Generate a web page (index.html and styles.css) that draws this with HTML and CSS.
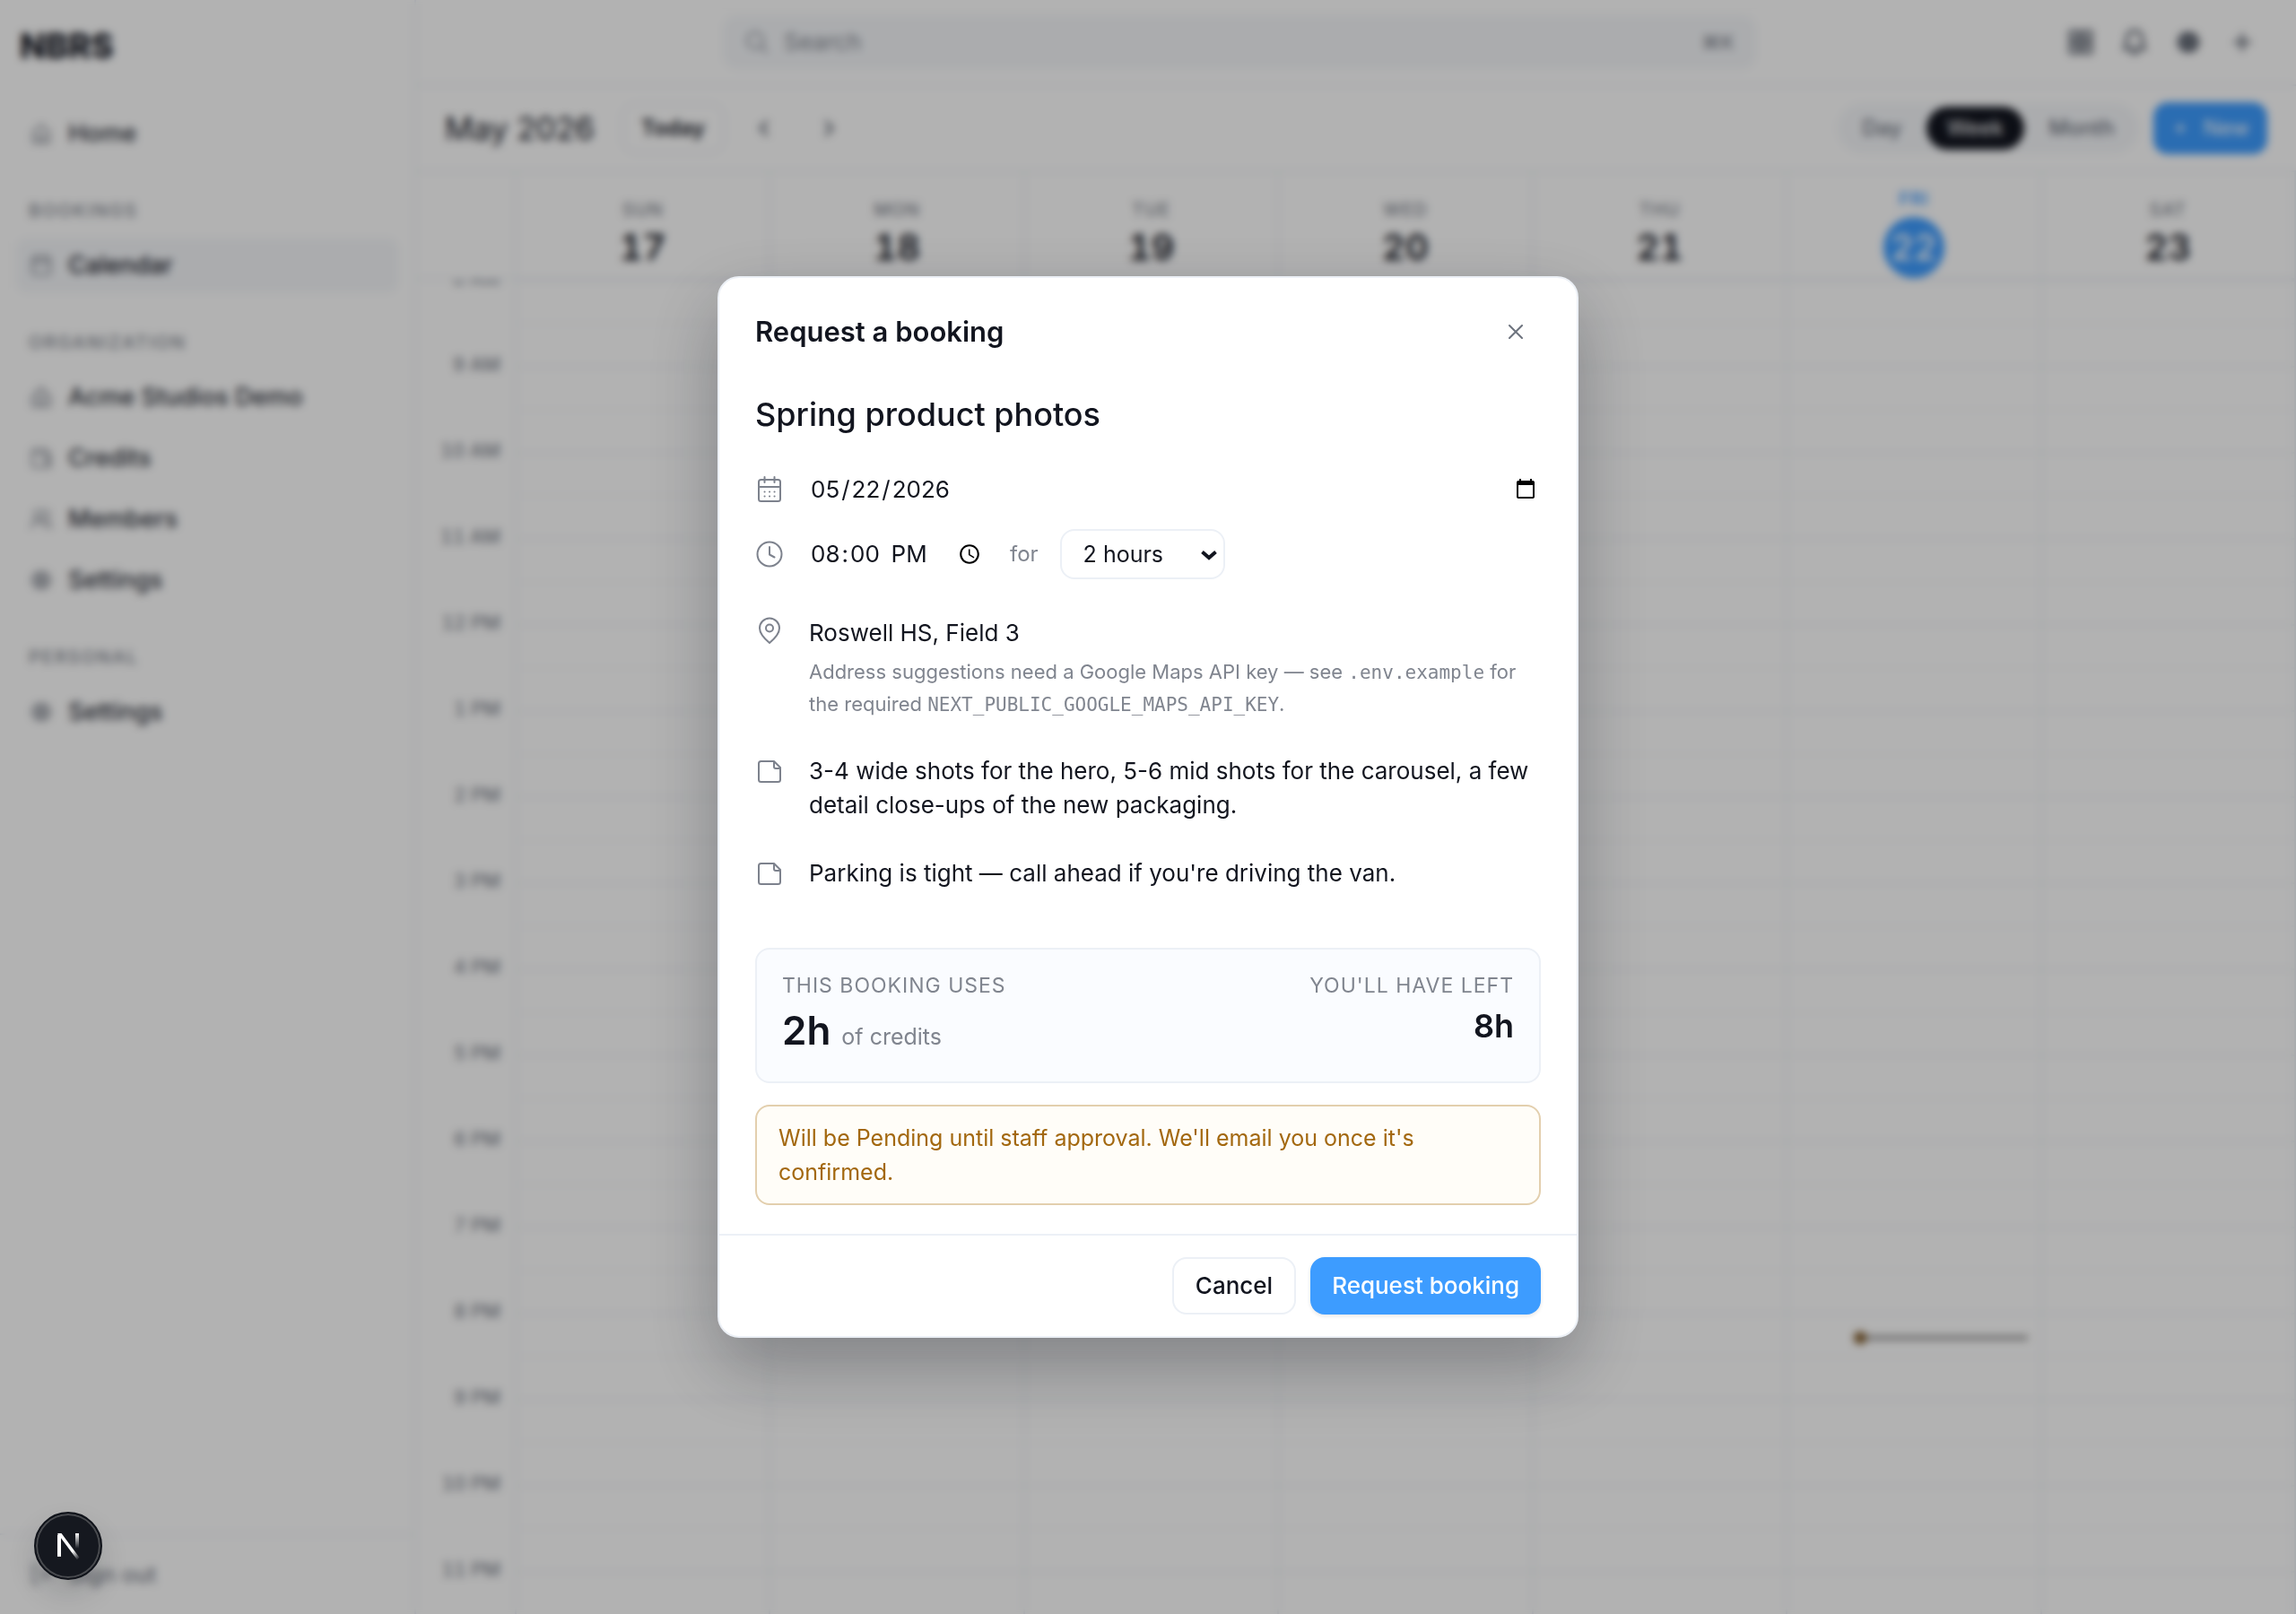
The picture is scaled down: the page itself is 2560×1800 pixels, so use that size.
FILE: index.html
```html
<!DOCTYPE html>
<html lang="en">
<head>
<meta charset="utf-8">
<title>NBRS Calendar</title>
<link rel="stylesheet" href="styles.css">
</head>
<body>
<svg class="sprite" aria-hidden="true">
  <symbol id="home" viewBox="0 0 28 28"><path d="M5 12 14 4l9 8v12H5zM11 24v-8h6v8"/></symbol>
  <symbol id="cal" viewBox="0 0 28 28"><rect x="4" y="5" width="20" height="19" rx="3"/><path d="M4 11h20M9 2v5M19 2v5"/></symbol>
  <symbol id="org" viewBox="0 0 28 28"><path d="M4 24V13h4V8l6-5 6 5v5h4v11zM11 24v-6h6v6M11 12h6"/></symbol>
  <symbol id="wallet" viewBox="0 0 28 28"><path d="M20 9V4H7a3 3 0 0 0-3 3v14a3 3 0 0 0 3 3h17V9H7M24 14h-6v5h6"/></symbol>
  <symbol id="users" viewBox="0 0 28 28"><circle cx="11" cy="9" r="5"/><path d="M3 24c0-5 3-8 8-8s8 3 8 8M18 4a5 5 0 0 1 0 10M21 17c3 1 4 4 4 7"/></symbol>
  <symbol id="gear" viewBox="0 0 28 28"><path d="M14 4l3 2 4-0 1 4 3 4-3 4-1 4h-4l-3 2-3-2H7l-1-4-3-4 3-4 1-4h4z"/><circle cx="14" cy="14" r="3"/><circle cx="14" cy="14" r="6"/></symbol>
  <symbol id="exit" viewBox="0 0 28 28"><path d="M11 4H5v20h6M18 9l5 5-5 5M23 14H11"/></symbol>
  <symbol id="note" viewBox="0 0 32 32"><path d="M20.5 4H6.500a2.500 2.500 0 0 0-2.500 2.500v18a2.500 2.500 0 0 0 2.500 2.500h19a2.500 2.500 0 0 0 2.500-2.500V11L21 4v6a2 2 0 0 0 2 2h5"/></symbol>
</svg>

<div class="app">
  <aside class="sidebar">
    <div class="logo">NBRS</div>
    <nav class="nav">
      <a class="nav-item" href="#"><svg class="nav-icon"><use href="#home"/></svg>Home</a>
      <div class="nav-label">BOOKINGS</div>
      <a class="nav-item active" href="#"><svg class="nav-icon"><use href="#cal"/></svg>Calendar</a>
      <div class="nav-label">ORGANIZATION</div>
      <div class="nav-group">
        <a class="nav-item" href="#"><svg class="nav-icon"><use href="#org"/></svg>Acme Studios Demo</a>
        <a class="nav-item" href="#"><svg class="nav-icon"><use href="#wallet"/></svg>Credits</a>
        <a class="nav-item" href="#"><svg class="nav-icon"><use href="#users"/></svg>Members</a>
        <a class="nav-item" href="#"><svg class="nav-icon"><use href="#gear"/></svg>Settings</a>
      </div>
      <div class="nav-label">PERSONAL</div>
      <a class="nav-item" href="#"><svg class="nav-icon"><use href="#gear"/></svg>Settings</a>
    </nav>
    <div class="signout"><a class="nav-item quiet" href="#"><svg class="nav-icon"><use href="#exit"/></svg>Sign out</a></div>
  </aside>

  <div class="main">
    <header class="topbar">
      <div class="search-slot">
        <label class="search">
          <svg class="search-icon" viewBox="0 0 28 28"><circle cx="12" cy="12" r="9"/><path d="M19 19l6 6"/></svg>
          <input class="search-input" type="text" placeholder="Search" aria-label="Search">
          <kbd class="kbd">⌘K</kbd>
        </label>
      </div>
      <div class="top-actions">
        <button class="icon-btn" aria-label="Apps"><svg viewBox="0 0 28 28"><path d="M3 3h9v9H3zM16 3h9v9h-9zM3 16h9v9H3zM16 16h9v9h-9z"/></svg></button>
        <button class="icon-btn" aria-label="Notifications"><svg viewBox="0 0 28 28"><path d="M14 2a8 8 0 0 0-8 8v6l-3 5h22l-3-5v-6a8 8 0 0 0-8-8zM11 25h6"/></svg></button>
        <button class="icon-btn" aria-label="Settings"><svg viewBox="0 0 28 28"><use href="#gear"/></svg></button>
        <button class="icon-btn" aria-label="Add"><svg viewBox="0 0 28 28"><path d="M14 6v16M6 14h16"/></svg></button>
      </div>
    </header>

    <div class="toolbar">
      <h1 class="month">May 2026</h1>
      <div class="pager">
        <button class="today-btn">Today</button>
        <button class="page-btn" aria-label="Previous week"><svg viewBox="0 0 28 28"><path d="M17 7l-7 7 7 7"/></svg></button>
        <button class="page-btn" aria-label="Next week"><svg viewBox="0 0 28 28"><path d="M11 7l7 7-7 7"/></svg></button>
      </div>
      <div class="views">
        <div class="segmented">
          <button class="seg">Day</button>
          <button class="seg on">Week</button>
          <button class="seg">Month</button>
        </div>
        <button class="new-btn"><svg viewBox="0 0 20 20"><path d="M10 5v10M5 10h10"/></svg>New</button>
      </div>
    </div>

    <div class="days">
      <div class="corner"></div>
      <div class="day"><span class="dow">SUN</span><span class="num">17</span></div>
      <div class="day"><span class="dow">MON</span><span class="num">18</span></div>
      <div class="day"><span class="dow">TUE</span><span class="num">19</span></div>
      <div class="day"><span class="dow">WED</span><span class="num">20</span></div>
      <div class="day"><span class="dow">THU</span><span class="num">21</span></div>
      <div class="day current"><span class="dow">FRI</span><span class="num">22</span></div>
      <div class="day"><span class="dow">SAT</span><span class="num">23</span></div>
    </div>

    <div class="grid">
      <div class="hours">
        <div class="hour"><span>8 AM</span></div><div class="hour"><span>9 AM</span></div>
        <div class="hour"><span>10 AM</span></div><div class="hour"><span>11 AM</span></div>
        <div class="hour"><span>12 PM</span></div><div class="hour"><span>1 PM</span></div>
        <div class="hour"><span>2 PM</span></div><div class="hour"><span>3 PM</span></div>
        <div class="hour"><span>4 PM</span></div><div class="hour"><span>5 PM</span></div>
        <div class="hour"><span>6 PM</span></div><div class="hour"><span>7 PM</span></div>
        <div class="hour"><span>8 PM</span></div><div class="hour"><span>9 PM</span></div>
        <div class="hour"><span>10 PM</span></div><div class="hour"><span>11 PM</span></div>
      </div>
      <div class="col"></div><div class="col"></div><div class="col"></div><div class="col"></div><div class="col"></div>
      <div class="col"><div class="now"></div></div>
      <div class="col"></div>
    </div>
  </div>
</div>

<div class="scrim">
  <form class="modal" role="dialog" aria-labelledby="dialog-title">
    <div class="modal-head">
      <h2 class="modal-title" id="dialog-title">Request a booking</h2>
      <button class="close" type="button" aria-label="Close"><svg viewBox="0 0 16 16"><path d="M1 1l14 14M15 1L1 15"/></svg></button>
    </div>
    <div class="modal-body">
      <input class="field name-field" type="text" value="Spring product photos" aria-label="Title">

      <div class="row date-row">
        <svg class="row-icon" viewBox="0 0 32 32"><rect x="4" y="5" width="24" height="24" rx="2.500"/><path d="M4 13h24M10.500 2v6M21.500 2v6"/><path class="dots" d="M10.500 18.500h.1M16 18.500h.1M21.500 18.500h.1M10.500 23.500h.1M16 23.500h.1M21.500 23.500h.1"/></svg>
        <input class="field date-field" type="date" value="2026-05-22" aria-label="Date">
      </div>

      <div class="row time-row">
        <svg class="row-icon" viewBox="0 0 32 32"><circle cx="16" cy="16" r="13.500"/><path d="M16 8v8.500l5.500 3"/></svg>
        <input class="field time-field" type="time" value="20:00" aria-label="Start time">
        <label class="for" for="duration">for</label>
        <div class="select-wrap">
          <select class="select" id="duration"><option>1 hour</option><option selected>2 hours</option><option>3 hours</option></select>
          <svg class="select-arrow" viewBox="0 0 20 12"><path d="M2.500 2.500l7.500 6.500 7.500-6.500"/></svg>
        </div>
      </div>

      <div class="row place-row">
        <svg class="row-icon" viewBox="0 0 32 32"><path d="M16 30C10 25 5 19.500 5 13.500a11 11 0 0 1 22 0C27 19.500 22 25 16 30z"/><circle cx="16" cy="13.500" r="4"/></svg>
        <div class="stack">
          <input class="field" type="text" value="Roswell HS, Field 3" aria-label="Location">
          <p class="hint">Address suggestions need a Google Maps API key — see <code>.env.example</code> for the required <code>NEXT_PUBLIC_GOOGLE_MAPS_API_KEY</code>.</p>
        </div>
      </div>

      <div class="row note-row">
        <svg class="row-icon"><use href="#note"/></svg>
        <textarea class="field area" rows="2" aria-label="Shot list">3-4 wide shots for the hero, 5-6 mid shots for the carousel, a few detail close-ups of the new packaging.</textarea>
      </div>
      <div class="row note-row">
        <svg class="row-icon"><use href="#note"/></svg>
        <textarea class="field area" rows="1" aria-label="Notes">Parking is tight — call ahead if you're driving the van.</textarea>
      </div>

      <div class="credits">
        <div>
          <div class="cap">THIS BOOKING USES</div>
          <div class="uses"><strong class="big">2h</strong><span class="unit">of credits</span></div>
        </div>
        <div class="left">
          <div class="cap">YOU'LL HAVE LEFT</div>
          <strong class="mid">8h</strong>
        </div>
      </div>
      <p class="notice">Will be Pending until staff approval. We'll email you once it's confirmed.</p>
    </div>
    <div class="modal-foot">
      <button class="btn cancel" type="button">Cancel</button>
      <button class="btn primary" type="submit">Request booking</button>
    </div>
  </form>
</div>

<button class="dev-badge" aria-label="Open dev tools">
  <svg viewBox="0 0 28 32">
    <defs>
      <linearGradient id="diag" x1="14" y1="16" x2="26" y2="31" gradientUnits="userSpaceOnUse"><stop offset=".4" stop-color="#fff"/><stop offset="1" stop-color="#fff" stop-opacity="0"/></linearGradient>
      <linearGradient id="stem" x1="0" y1="2" x2="0" y2="19" gradientUnits="userSpaceOnUse"><stop stop-color="#fff"/><stop offset="1" stop-color="#fff" stop-opacity="0"/></linearGradient>
    </defs>
    <path d="M4 28V3.500" stroke="#fff" stroke-width="4"/>
    <path d="M2 2h4.500L26.500 29l-2.500 2.500L5 6z" fill="url(#diag)"/>
    <rect x="22" y="2" width="4" height="17" fill="url(#stem)"/>
  </svg>
</button>
</body>
</html>
```
FILE: styles.css
```css
* { box-sizing: border-box; }

:root {
  --ink: #12151f;
  --muted: #80858f;
  --line: #ecf0f6;
  --soft: #f5f7fa;
  --blue: #3d9cff;
}

body {
  margin: 0;
  font-family: Inter, "Liberation Sans", sans-serif;
  font-size: 26px;
  line-height: 38px;
  color: var(--ink);
  background: #fff;
}

button, input, select, textarea { font: inherit; color: inherit; }
button { border: 0; background: none; padding: 0; cursor: pointer; }
a { color: inherit; text-decoration: none; }
h1, h2, p { margin: 0; }
svg { fill: none; stroke: currentColor; stroke-width: 2; stroke-linecap: round; stroke-linejoin: round; flex: none; }
.sprite { display: none; }

.app { display: flex; height: 100vh; overflow: hidden; }

/* Sidebar */
.sidebar { width: 464px; flex: none; display: flex; flex-direction: column; border-right: 2px solid var(--line); }
.logo { padding: 32px 22px 49px; font-size: 38px; line-height: 38px; font-weight: 800; }
.nav { flex: 1; padding: 0 18px; }
.nav-group { display: flex; flex-direction: column; gap: 8px; }
.nav-item { display: flex; align-items: center; gap: 16px; height: 60px; padding: 0 14px; border-radius: 12px; font-size: 27px; font-weight: 500; color: #2a2e38; }
.nav-item.active { background: var(--soft); color: var(--ink); }
.nav-item.quiet { font-size: 25px; color: var(--muted); }
.nav-icon { width: 28px; height: 28px; color: var(--muted); }
.nav-label { padding: 0 14px; margin: 41px 0 16px; font-size: 20px; line-height: 30px; font-weight: 500; letter-spacing: 2px; color: var(--muted); }
.signout { padding: 14px 18px; border-top: 2px solid var(--line); }

/* Top bar */
.main { flex: 1; min-width: 0; display: flex; flex-direction: column; }
.topbar { display: flex; align-items: center; gap: 40px; height: 96px; padding: 0 40px; border-bottom: 2px solid var(--line); }
.search-slot { flex: 1; display: flex; justify-content: center; }
.search { display: flex; align-items: center; gap: 16px; width: 1152px; height: 60px; padding: 0 24px; border-radius: 16px; background: var(--soft); }
.search-icon { width: 28px; height: 28px; color: var(--muted); }
.search-input { flex: 1; border: 0; padding: 0; background: none; }
.search-input::placeholder { color: var(--muted); }
.kbd { font: 500 22px Inter, "DejaVu Sans", sans-serif; color: var(--muted); }
.top-actions { display: flex; gap: 20px; }
.icon-btn { display: grid; place-items: center; width: 40px; height: 40px; color: #535a67; }
.icon-btn svg { width: 30px; height: 30px; stroke-width: 3; }

/* Calendar toolbar */
.toolbar { display: flex; align-items: center; gap: 30px; height: 96px; padding: 0 32px; border-bottom: 2px solid var(--line); }
.month { font-size: 35px; font-weight: 400; }
.pager { display: flex; gap: 16px; }
.today-btn { height: 56px; padding: 0 20px; border: 2px solid var(--line); border-radius: 16px; font-size: 24px; font-weight: 600; }
.page-btn { display: grid; place-items: center; width: 56px; height: 56px; color: #535a67; }
.page-btn svg { width: 28px; height: 28px; stroke-width: 3; }
.views { display: flex; align-items: center; gap: 16px; margin-left: auto; }
.segmented { display: flex; gap: 4px; padding: 4px; border-radius: 28px; background: var(--soft); }
.seg { height: 48px; padding: 0 23px; border-radius: 24px; font-size: 24px; font-weight: 500; color: #6b717d; }
.seg.on { background: var(--ink); color: #fff; font-weight: 400; }
.new-btn { display: flex; align-items: center; gap: 16px; height: 58px; padding: 0 20px; border-radius: 16px; background: var(--blue); color: #fff; font-size: 24px; font-weight: 400; }
.new-btn svg { width: 20px; height: 20px; }

/* Week header and grid */
.days, .grid { display: grid; grid-template-columns: 112px repeat(7, 1fr); font-variant-numeric: tabular-nums; }
.days { height: 120px; border-bottom: 2px solid var(--line); }
.corner, .day, .hours, .col { border-right: 2px solid var(--line); }
.day { display: flex; flex-direction: column; align-items: center; justify-content: center; gap: 8px; padding-top: 18px; }
.dow { font-size: 20px; line-height: 24px; font-weight: 500; letter-spacing: 1px; color: var(--muted); }
.num { font-size: 40px; line-height: 44px; font-weight: 600; }
.current .dow { color: var(--blue); font-weight: 600; }
.current .num { width: 68px; line-height: 68px; border-radius: 50%; text-align: center; background: var(--blue); color: #fff; font-weight: 500; }
.grid { flex: 1; min-height: 0; overflow: hidden; }
.hours { display: flex; flex-direction: column; }
.hour { flex: none; height: 96px; padding-right: 16px; text-align: right; font-size: 21px; line-height: 28px; font-weight: 500; color: var(--muted); }
.hour span { display: block; margin-top: -15px; }
.col { position: relative; background: repeating-linear-gradient(#eef1f6 0 2px, transparent 2px 48px, #f6f8fb 48px 50px, transparent 50px 96px); }
.now { position: absolute; left: 80px; right: 14px; top: 1178px; height: 4px; background: #7c7b7c; }
.now::before { content: ""; position: absolute; left: -6px; top: -5px; width: 14px; height: 14px; border-radius: 50%; background: #7a5420; }

/* Dialog */
.scrim { position: fixed; inset: 0; display: grid; place-items: center; background: rgba(0, 0, 0, .3); backdrop-filter: blur(5px); }
.modal { width: 960px; border: 2px solid var(--line); border-radius: 24px; background: #fff; box-shadow: 0 32px 80px rgba(16, 20, 31, .3); }
.modal-head { display: flex; align-items: center; justify-content: space-between; padding: 32px 40px 24px; }
.modal-title { font-size: 31px; font-weight: 600; }
.close { display: grid; place-items: center; width: 56px; height: 56px; color: #6d737e; }
.close svg { width: 16px; height: 16px; }
.modal-body { display: flex; flex-direction: column; padding: 12px 40px 32px; }

.field { display: block; width: 100%; min-width: 0; height: 38px; border: 0; padding: 0; margin: 0; background: none; outline: 0; }
.name-field { height: 56px; font-size: 36px; font-weight: 500; }
.row { display: flex; align-items: center; gap: 28px; }
.row-icon { width: 32px; height: 32px; color: #7d828d; }
.row-icon .dots { stroke-width: 2; }
.date-row { height: 56px; margin-top: 28px; }
.time-row { height: 56px; margin-top: 16px; }
.date-field { padding-right: 4px; }
.time-field { width: 192px; }
.date-field::-webkit-datetime-edit-month-field,
.date-field::-webkit-datetime-edit-day-field,
.date-field::-webkit-datetime-edit-year-field,
.time-field::-webkit-datetime-edit-hour-field,
.time-field::-webkit-datetime-edit-minute-field { padding: 0 2px; }
.time-field::-webkit-datetime-edit-ampm-field { padding: 0 2px 0 6px; }
.field::-webkit-calendar-picker-indicator { width: 26px; height: 26px; padding: 0; }
.for { margin-left: 4px; font-size: 24px; color: var(--muted); }
.select-wrap { position: relative; margin-left: -4px; }
.select { appearance: none; width: 184px; height: 56px; padding: 0 24px; border: 2px solid var(--line); border-radius: 16px; background: #fff; font-size: 25px; }
.select-arrow { position: absolute; right: 8px; top: 23px; width: 20px; height: 12px; stroke-width: 4; stroke-linecap: butt; stroke-linejoin: miter; pointer-events: none; }

.place-row { align-items: flex-start; margin-top: 41px; }
.stack { flex: 1; }
.hint { margin-top: 6px; font-size: 22px; line-height: 36px; color: var(--muted); }
.hint code { font-family: "DejaVu Sans Mono", monospace; font-size: 21px; line-height: 22px; }
.note-row { align-items: flex-start; margin-top: 38px; }
.note-row .row-icon { margin-top: 4px; }
.area { height: auto; resize: none; overflow: hidden; }

.credits { display: flex; justify-content: space-between; height: 151px; margin-top: 64px; padding: 24px 28px; border: 2px solid var(--line); border-radius: 16px; background: #fafcff; }
.cap { font-size: 23px; line-height: 32px; letter-spacing: 1px; color: var(--muted); }
.uses { display: flex; align-items: baseline; gap: 12px; margin-top: 2px; line-height: 64px; }
.big { font-size: 44px; font-weight: 600; }
.unit { font-size: 25px; color: var(--muted); }
.left { text-align: right; }
.mid { display: block; font-size: 36px; line-height: 58px; font-weight: 600; }
.notice { margin-top: 24px; padding: 16px 24px; border: 2px solid #e3cfae; border-radius: 16px; background: #fffdf8; color: #a3680f; font-size: 25px; }

.modal-foot { display: flex; justify-content: flex-end; gap: 16px; padding: 24px 40px; border-top: 2px solid var(--line); }
.btn { height: 64px; padding: 0 24px; border-radius: 16px; font-weight: 500; }
.cancel { border: 2px solid var(--line); background: #fff; }
.primary { background: var(--blue); color: #fff; box-shadow: 0 2px 4px rgba(16, 20, 31, .1); }

/* Floating dev badge */
.dev-badge { position: fixed; left: 38px; bottom: 38px; display: grid; place-items: center; width: 76px; height: 76px; border-radius: 50%; background: #15181f; border: 2px solid #10131a; box-shadow: inset 0 0 0 2px #4a4c50, 0 16px 32px rgba(16, 20, 31, .14); }
.dev-badge svg { width: 28px; height: 32px; stroke: none; stroke-linecap: butt; }
```
